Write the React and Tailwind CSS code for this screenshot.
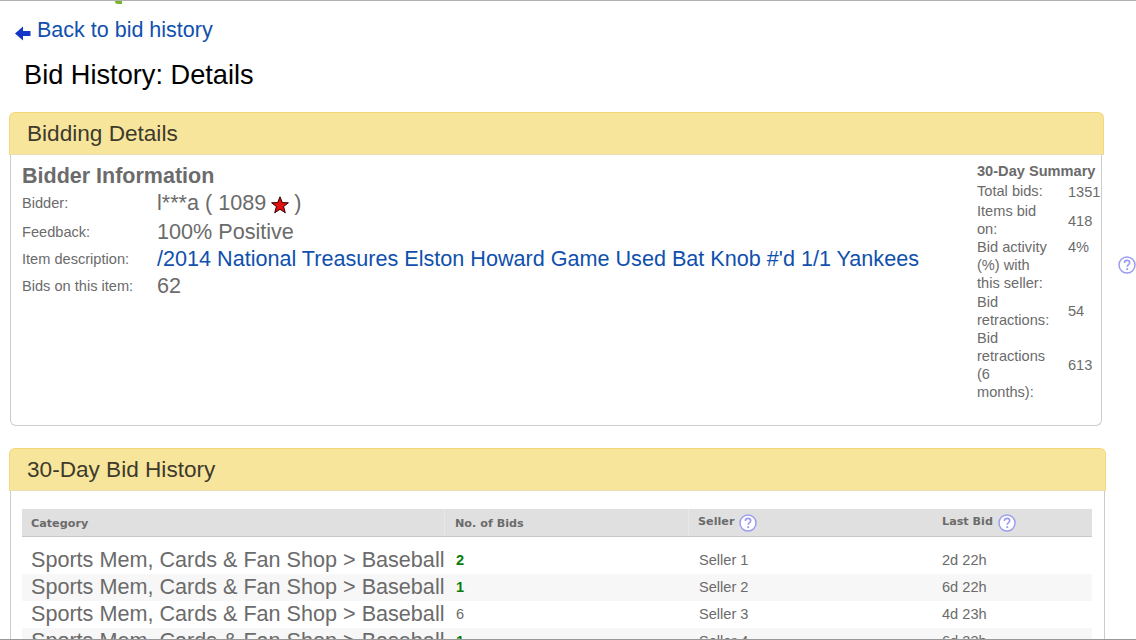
const rows = [
  { bids: '2', green: true, seller: 'Seller 1', last: '2d 22h' },
  { bids: '1', green: true, seller: 'Seller 2', last: '6d 22h' },
  { bids: '6', green: false, seller: 'Seller 3', last: '4d 23h' },
  { bids: '1', green: true, seller: 'Seller 4', last: '6d 23h' },
];

function HelpIcon({ size = 18 }) {
  return (
    <svg width={size} height={size} viewBox="0 0 18 18" className="shrink-0">
      <circle cx="9" cy="9" r="8" fill="#fff" stroke="#9c9cf0" strokeWidth="1.5" />
      <path d="M6.4 7 C6.4 5.2 7.6 4.4 9 4.4 C10.5 4.4 11.7 5.3 11.7 6.8 C11.7 8.6 9.2 8.8 9.2 10.8" fill="none" stroke="#9c9cf0" strokeWidth="1.6" />
      <circle cx="9.2" cy="13.2" r="1.1" fill="#9c9cf0" />
    </svg>
  );
}

function PanelHeader({ title }) {
  return (
    <div className="h-[43px] flex items-center pl-[17px] bg-[#f8e59c] border border-[#f5d77a] border-b-[#e8dfb8] rounded-t-[6px] text-[22.6px] text-[#3d3a2c]">
      {title}
    </div>
  );
}

function InfoRow({ label, children, className = '' }) {
  return (
    <div className={`flex items-center h-[27px] ${className}`}>
      <div className="w-[135px] text-[14.6px] text-[#6b6b6b]">{label}</div>
      <div className="text-[21.6px] text-[#6b6b6b] whitespace-nowrap">{children}</div>
    </div>
  );
}

function SummaryRow({ value, className = '', valueClass = '', children }) {
  return (
    <div className={`flex items-center ${className}`}>
      <div className="w-[91px] pr-[15px]">{children}</div>
      <div className={valueClass}>{value}</div>
    </div>
  );
}

export default function App() {
  return (
    <div className="relative h-[640px] w-[1136px] overflow-hidden bg-white font-['Liberation_Sans',Arial,sans-serif]">
      <div className="h-px bg-[#b0b0b0]" />
      {/* bit of the logo cut off above */}
      <div className="absolute left-[115px] top-px h-[3px] w-[7px] rounded-bl-[4px] bg-[#7ab32e]" />

      <div className="flex items-center pl-[15px] mt-[16px] h-[28px]">
        <svg width="16" height="15" viewBox="0 0 16 15" className="mr-[6px] mt-[4px]">
          <path d="M0 7.5 L8 0.5 V5 H15.5 V10 H8 V14.5 Z" fill="#1437c8" />
        </svg>
        <a className="-mt-[2px] text-[21.5px] text-[#0f50ae]">Back to bid history</a>
      </div>
      <h1 className="pl-[24px] mt-[13px] h-[34px] text-[27.2px] leading-[34px] text-black">Bid History: Details</h1>

      <div className="ml-[9px] mt-[20px] w-[1095px]">
        <PanelHeader title="Bidding Details" />
        <div className="flex h-[271px] ml-px w-[1092px] border border-t-0 border-[#ccc] rounded-b-[6px]">
          <div className="flex-1 pl-[11px] pt-[9px]">
            <div className="mb-[2px] text-[21.5px] leading-[24px] font-bold text-[#6b6b6b]">Bidder Information</div>
            <InfoRow label="Bidder:">
              <span className="flex items-center">
                l***a ( 1089
                <svg width="18" height="18" viewBox="0 0 18 18" className="mx-[5px] mt-[3px]">
                  <path d="M9 0.8 L11.3 6.6 L17.4 6.8 L12.6 10.6 L14.3 16.8 L9 13.3 L3.7 16.8 L5.4 10.6 L0.6 6.8 L6.7 6.6 Z" fill="#e01010" stroke="#300" strokeWidth="1" />
                </svg>
                )
              </span>
            </InfoRow>
            <InfoRow label="Feedback:" className="mt-[2px]">100% Positive</InfoRow>
            <InfoRow label="Item description:">
              <a className="text-[#0f50ae]">/2014 National Treasures Elston Howard Game Used Bat Knob #'d 1/1 Yankees</a>
            </InfoRow>
            <InfoRow label="Bids on this item:">62</InfoRow>
          </div>
          <div className="w-[124px] pt-[7px] text-[14.6px] leading-[18px] text-[#6b6b6b]">
            <div className="font-bold whitespace-nowrap">30-Day Summary</div>
            <SummaryRow value="1351" className="h-[22px]" valueClass="pt-[2px]">Total bids:</SummaryRow>
            <SummaryRow value="418" valueClass="pt-[2px]">Items bid on:</SummaryRow>
            <SummaryRow value="4%" className="items-start">Bid activity (%) with this seller:</SummaryRow>
            <SummaryRow value="54" className="mt-px">Bid retractions:</SummaryRow>
            <SummaryRow value="613">Bid retractions<br />(6<br />months):</SummaryRow>
          </div>
        </div>
      </div>

      <div className="absolute left-[1118px] top-[256px]">
        <HelpIcon />
      </div>

      <div className="ml-[9px] mt-[22px] w-[1097px]">
        <PanelHeader title="30-Day Bid History" />
        <div className="ml-px w-[1095px] h-[200px] border-x border-[#ccc] pl-[11px] pt-[18px]">
          <div className="w-[1070px]">
            <div className="flex h-[28px] bg-[#e0e0e0] border-b border-[#c8c8c8] text-[11.2px] font-bold text-[#6b6b6b] font-['DejaVu_Sans',sans-serif]">
              <div className="w-[423px] pl-[9px] pt-[3px] flex items-center border-r border-[#e8e8e8]">Category</div>
              <div className="w-[244px] pl-[10px] pt-[3px] flex items-center border-r border-[#e8e8e8]">No. of Bids</div>
              <div className="w-[243px] pl-[9px] flex items-center gap-[5px]">Seller <HelpIcon /></div>
              <div className="flex-1 pl-[10px] flex items-center gap-[5px]">Last Bid <HelpIcon /></div>
            </div>
            <div className="mt-[10px]">
              {rows.map((r, i) => (
                <div key={r.seller} className={`flex items-center h-[27px] text-[#6b6b6b] ${i % 2 === 1 ? 'bg-[#f7f7f7]' : ''}`}>
                  <div className="w-[423px] pl-[9px] text-[21.6px] whitespace-nowrap">Sports Mem, Cards &amp; Fan Shop &gt; Baseball</div>
                  <div className={`w-[244px] pl-[11px] text-[14.6px] ${r.green ? 'font-bold text-[#0a7d0a]' : ''}`}>{r.bids}</div>
                  <div className="w-[243px] pl-[10px] text-[14.6px]">{r.seller}</div>
                  <div className="flex-1 pl-[10px] text-[14.6px]">{r.last}</div>
                </div>
              ))}
            </div>
          </div>
        </div>
      </div>

      <div className="absolute inset-x-0 bottom-0 h-px bg-[#999]" />
    </div>
  );
}
